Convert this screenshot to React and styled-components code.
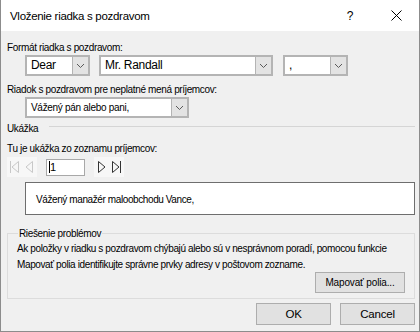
import React from "react";
import styled, { createGlobalStyle } from "styled-components";

const FONT = `"Liberation Sans", Arial, sans-serif`;

const Global = createGlobalStyle`
  html, body { margin: 0; padding: 0; background: #f0f0f0; }
  body { font-family: ${FONT}; font-size: 10px; letter-spacing: -0.35px; color: #000; }
`;

const Window = styled.div`
  width: 420px;
  height: 332px;
  box-sizing: border-box;
  border: 1px solid #8c8c8c;
  border-top: none;
  background: #f0f0f0;
  display: flex;
  flex-direction: column;
  overflow: hidden;
`;

const TitleBar = styled.div`
  height: 31px;
  background: #fff;
  display: flex;
  align-items: center;
  padding-left: 9px;
  flex-shrink: 0;
`;

const Title = styled.div`
  flex: 1;
  font-size: 11.5px;
  letter-spacing: -0.3px;
  color: #000;
`;

const TitleBtn = styled.div`
  width: ${(p) => p.w}px;
  height: 31px;
  display: flex;
  align-items: center;
  justify-content: center;
  font-size: 12px;
  color: #000;
`;

const Body = styled.div`
  flex: 1;
  display: flex;
  flex-direction: column;
  padding: 0 4px 0 6px;
`;

const Label = styled.div`
  line-height: 15px;
  height: 15px;
  margin-top: ${(p) => p.mt || 0}px;
  white-space: nowrap;
`;

const ComboRow = styled.div`
  display: flex;
  margin-left: ${(p) => p.ml || 18}px;
  margin-top: ${(p) => p.mt || 0}px;
`;

const ComboBox = styled.div`
  width: ${(p) => p.w}px;
  height: 21px;
  box-sizing: border-box;
  border: 2px solid #b4b4b4;
  background: #fff;
  display: flex;
  margin-right: ${(p) => p.mr || 0}px;
`;

const ComboText = styled.div`
  flex: 1;
  font-size: ${(p) => (p.large ? 12 : 10)}px;
  letter-spacing: -0.3px;
  line-height: 17px;
  padding-left: 4px;
  white-space: nowrap;
  overflow: hidden;
`;

const ComboBtn = styled.div`
  width: 15px;
  background: #e3e3e3;
  border-left: 1px solid #b4b4b4;
  display: flex;
  align-items: center;
  justify-content: center;
`;

const SectionHead = styled.div`
  display: flex;
  align-items: center;
  margin-top: ${(p) => p.mt || 0}px;
  height: 15px;
`;

const SectionLine = styled.div`
  flex: 1;
  height: 1px;
  background: #d5d5d5;
  margin: 0 0 4px 11px;
`;

const NavRow = styled.div`
  display: flex;
  align-items: center;
  margin-top: 1px;
  height: 20px;
`;

const NavGroup = styled.div`
  display: flex;
  align-items: center;
  background: #f7f7f7;
  height: 20px;
  padding: 0 1px;
`;

const NavBtn = styled.div`
  width: 14px;
  height: 20px;
  display: flex;
  align-items: center;
  justify-content: center;
`;

const RecordInput = styled.div`
  width: 39px;
  height: 17px;
  box-sizing: border-box;
  border: 1px solid #a8a8a8;
  background: #fff;
  margin: 0 9px;
  font-size: 11px;
  line-height: 15px;
  padding-left: 2px;
  display: flex;
  align-items: center;
`;

const Caret = styled.span`
  display: inline-block;
  width: 1px;
  height: 12px;
  background: #000;
`;

const Preview = styled.div`
  margin: 5px 0 0 18px;
  height: 33px;
  box-sizing: border-box;
  border: 1px solid #6e6e6e;
  background: #fff;
  display: flex;
  align-items: center;
  padding-left: 10px;
  padding-top: 2px;
  font-size: 10px;
  letter-spacing: -0.4px;
`;

const GroupBox = styled.fieldset`
  margin: 11px 0 0 0;
  padding: 0 9px 5px 9px;
  border: 1px solid #dcdcdc;
  min-width: 0;
`;

const Legend = styled.legend`
  padding: 0 1px;
  margin-left: 1px;
  line-height: 15px;
`;

const Para = styled.div`
  line-height: 16px;
  letter-spacing: -0.38px;
  white-space: nowrap;
`;

const GroupFooter = styled.div`
  display: flex;
  justify-content: flex-end;
  margin-top: -1px;
`;

const Button = styled.div`
  width: ${(p) => p.w || 75}px;
  height: ${(p) => p.h || 22}px;
  box-sizing: border-box;
  border: 1px solid #adadad;
  background: #e1e1e1;
  display: flex;
  align-items: center;
  justify-content: center;
  font-size: ${(p) => p.fs || 11.5}px;
  letter-spacing: ${(p) => (p.ls != null ? p.ls : -0.2)}px;
  margin-left: ${(p) => p.ml || 0}px;
`;

const Footer = styled.div`
  display: flex;
  justify-content: flex-end;
  margin-top: 4px;
`;

const Chevron = () => (
  <svg width="9" height="6" viewBox="0 0 9 6">
    <path d="M1 1 L4.5 4.5 L8 1" fill="none" stroke="#5a5a5a" strokeWidth="1" />
  </svg>
);

const Combo = ({ w, text, mr, large }) => (
  <ComboBox w={w} mr={mr}>
    <ComboText large={large}>{text}</ComboText>
    <ComboBtn>
      <Chevron />
    </ComboBtn>
  </ComboBox>
);

const Tri = ({ dir, bar, color }) => (
  <svg width="12" height="14" viewBox="0 0 12 14">
    {dir === "right" ? (
      <path d="M2.5 1.5 L9 7 L2.5 12.5 Z" fill="none" stroke={color} strokeWidth="1" />
    ) : (
      <path d="M9.5 1.5 L3 7 L9.5 12.5 Z" fill="none" stroke={color} strokeWidth="1" />
    )}
    {bar === "right" && <line x1="10.5" y1="1" x2="10.5" y2="13" stroke={color} strokeWidth="1" />}
    {bar === "left" && <line x1="1.5" y1="1" x2="1.5" y2="13" stroke={color} strokeWidth="1" />}
  </svg>
);

export default function App() {
  return (
    <>
      <Global />
      <Window>
        <TitleBar>
          <Title>Vloženie riadka s pozdravom</Title>
          <TitleBtn w={46}>?</TitleBtn>
          <TitleBtn w={46}>
            <svg width="11" height="11" viewBox="0 0 11 11">
              <path d="M0.5 0.5 L10.5 10.5 M10.5 0.5 L0.5 10.5" stroke="#000" strokeWidth="1" />
            </svg>
          </TitleBtn>
        </TitleBar>
        <Body>
          <Label mt={9}>Formát riadka s pozdravom:</Label>
          <ComboRow ml={18}>
            <Combo w={65} text="Dear" mr={9} large />
            <Combo w={174} text="Mr. Randall" mr={10} large />
            <Combo w={65} text="," large />
          </ComboRow>
          <Label mt={6}>Riadok s pozdravom pre neplatné mená príjemcov:</Label>
          <ComboRow ml={18}>
            <Combo w={164} text="Vážený pán alebo pani," />
          </ComboRow>
          <SectionHead mt={3}>
            Ukážka
            <SectionLine />
          </SectionHead>
          <Label mt={5}>Tu je ukážka zo zoznamu príjemcov:</Label>
          <NavRow>
            <NavGroup>
              <NavBtn><Tri dir="left" bar="left" color="#c8c8c8" /></NavBtn>
              <NavBtn><Tri dir="left" color="#c8c8c8" /></NavBtn>
            </NavGroup>
            <RecordInput>
              <Caret />1
            </RecordInput>
            <NavGroup>
              <NavBtn><Tri dir="right" color="#333" /></NavBtn>
              <NavBtn><Tri dir="right" bar="right" color="#333" /></NavBtn>
            </NavGroup>
          </NavRow>
          <Preview>Vážený manažér maloobchodu Vance,</Preview>
          <GroupBox>
            <Legend>Riešenie problémov</Legend>
            <Para>
              Ak položky v riadku s pozdravom chýbajú alebo sú v nesprávnom poradí, pomocou funkcie
              <br />
              Mapovať polia identifikujte správne prvky adresy v poštovom zozname.
            </Para>
            <GroupFooter>
              <Button w={90} h={21} fs={10} ls={-0.15}>Mapovať polia...</Button>
            </GroupFooter>
          </GroupBox>
          <Footer>
            <Button>OK</Button>
            <Button ml={9}>Cancel</Button>
          </Footer>
        </Body>
      </Window>
    </>
  );
}
